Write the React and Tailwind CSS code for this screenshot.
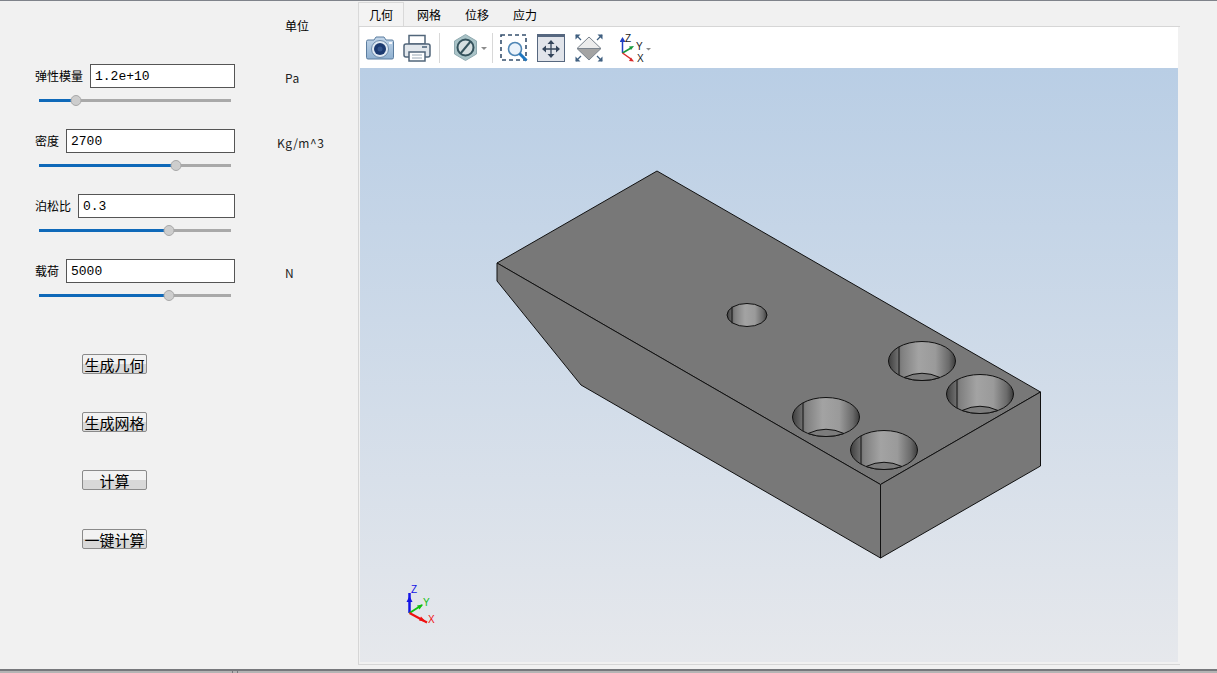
import React from 'react';

const fields = [
  { label: '弹性模量', value: '1.2e+10', thumb: 37, unit: 'Pa', unitClass: 'pl-[50px]' },
  { label: '密度', value: '2700', thumb: 137, unit: 'Kg/m^3', unitClass: 'pl-[42px]' },
  { label: '泊松比', value: '0.3', thumb: 130, unit: '', unitClass: '' },
  { label: '载荷', value: '5000', thumb: 130, unit: 'N', unitClass: 'pl-[50px]' },
];

const actions = ['生成几何', '生成网格', '计算', '一键计算'];
const tabs = ['几何', '网格', '位移', '应力'];

const holes = [
  { cx: 922, cy: 361 },
  { cx: 980, cy: 394 },
  { cx: 826, cy: 417 },
  { cx: 884, cy: 450 },
];

function Slider({ thumb }) {
  return (
    <div className="relative h-[3px] w-[192px] bg-[#a9a9a9]">
      <div className="h-full bg-[#0f69b9]" style={{ width: thumb }} />
      <div className="absolute top-[-4px] h-[11px] w-[11px] -translate-x-1/2 rounded-full border border-[#a8a8a8] bg-[#cdcdcd]" style={{ left: thumb }} />
    </div>
  );
}

function Field({ label, value, thumb, unit, unitClass }) {
  return (
    <div className="flex h-[65px]">
      <div className="w-[200px]">
        <div className="flex items-center gap-[7px]">
          <span className="text-xs leading-none whitespace-nowrap text-black">{label}</span>
          <input
            readOnly
            value={value}
            className="h-[24px] min-w-0 flex-1 border border-[#555] bg-white px-[4px] text-[13px] text-black outline-none [font-family:'Liberation_Mono',monospace]"
          />
        </div>
        <div className="mt-[11px] pl-[4px]">
          <Slider thumb={thumb} />
        </div>
      </div>
      <div className={`pt-[6px] text-xs leading-4 tracking-[0.5px] text-[#222] ${unitClass}`}>{unit}</div>
    </div>
  );
}

function Camera() {
  return (
    <svg width="28" height="24" viewBox="0 0 28 24">
      <defs>
        <linearGradient id="camBody" x1="0" y1="0" x2="0" y2="1">
          <stop offset="0" stopColor="#c3d6e9" />
          <stop offset="1" stopColor="#8fb0d0" />
        </linearGradient>
      </defs>
      <path d="M2 4h6l2-3h8l2 3h6a1.500 1.500 0 0 1 1.500 1.500v16a1.500 1.500 0 0 1-1.500 1.500H2a1.500 1.500 0 0 1-1.500-1.500v-16A1.500 1.500 0 0 1 2 4z" fill="url(#camBody)" stroke="#5b7d9f" />
      <rect x="23" y="6" width="3" height="2" fill="#f4f7fb" />
      <circle cx="14" cy="13" r="8.500" fill="#dfe9f3" stroke="#6f8cab" />
      <circle cx="14" cy="13" r="6" fill="#1c3a70" />
      <circle cx="14" cy="13" r="2.500" fill="#34558c" />
    </svg>
  );
}

function Printer() {
  return (
    <svg width="28" height="28" viewBox="0 0 28 28">
      <path d="M6 10V1.500h16V10z" fill="#fff" stroke="#51667a" strokeWidth="1.500" />
      <path d="M3 10h22a2 2 0 0 1 2 2v9a2 2 0 0 1-2 2H3a2 2 0 0 1-2-2v-9a2 2 0 0 1 2-2z" fill="#e2e7ec" stroke="#51667a" strokeWidth="1.500" />
      <rect x="19" y="12" width="5" height="2" fill="#6f8294" />
      <rect x="6" y="18" width="16" height="9" fill="#fff" stroke="#51667a" strokeWidth="1.500" />
      <path d="M9 21h10M9 24h10" stroke="#9aa8b5" />
    </svg>
  );
}

function HexIcon() {
  return (
    <svg width="33" height="27" viewBox="0 0 33 27">
      <path d="M11.500 0.500l11 6.500v13l-11 6.500-11-6.500V7z" fill="#a9c3c7" stroke="#90aab0" />
      <circle cx="11.500" cy="13.500" r="8" fill="#d6dfe1" stroke="#35535d" strokeWidth="2" />
      <path d="M6.500 19.500l10-12" stroke="#35535d" strokeWidth="2" />
      <path d="M27 13h6l-3 3z" fill="#8c8c8c" />
    </svg>
  );
}

function ZoomBox() {
  return (
    <svg width="28" height="28" viewBox="0 0 28 28">
      <rect x="1" y="1" width="25" height="25" fill="none" stroke="#36506e" strokeWidth="1.600" strokeDasharray="4 3" />
      <circle cx="15" cy="15" r="6.500" fill="#eaf2fa" stroke="#4f86b5" strokeWidth="1.600" />
      <path d="M19.500 19.500l7 7" stroke="#1f77c0" strokeWidth="3" />
    </svg>
  );
}

function FitAll() {
  return (
    <svg width="28" height="28" viewBox="0 0 28 28">
      <rect x="0.500" y="0.500" width="27" height="27" fill="#e1e4ea" stroke="#56677f" />
      <rect x="0" y="0" width="28" height="3" fill="#56677f" />
      <path d="M14 9v12M8 15h12" stroke="#33445a" strokeWidth="1.300" />
      <path d="M14 6l3.500 4h-7zM14 24l3.500-4h-7zM5 15l4-3.500v7zM23 15l-4-3.500v7z" fill="#33445a" />
    </svg>
  );
}

function Diamond() {
  return (
    <svg width="28" height="28" viewBox="0 0 28 28">
      <path d="M14 3l12 11.500H2z" fill="#ececec" stroke="#7b848e" />
      <path d="M2 14.500h24L14 26z" fill="#a3a3a3" stroke="#7b848e" />
      <path d="M1 1l5 5M27 1l-5 5M1 27l5-5M27 27l-5-5" stroke="#3f5f80" strokeWidth="1.300" />
      <path d="M0.500 0.500h5l-5 5zM27.500 0.500h-5l5 5zM0.500 27.500h5l-5-5zM27.500 27.500h-5l5-5z" fill="#3f5f80" />
    </svg>
  );
}

function AxesIcon() {
  return (
    <svg width="32" height="32" viewBox="0 0 32 32">
      <path d="M2.500 21V9" stroke="#1f3fc4" strokeWidth="1.500" />
      <path d="M2.500 5l3 5h-6z" fill="#1f3fc4" />
      <path d="M2.500 21L11 16" stroke="#179a3c" strokeWidth="1.500" />
      <path d="M14 14l-5 .500 2 3.500z" fill="#179a3c" />
      <path d="M2.500 21L11 27" stroke="#d92a2a" strokeWidth="1.500" />
      <path d="M14 29.500l-5-.500 2-3.500z" fill="#d92a2a" />
      <text x="5" y="10" fontSize="10" fill="#222" fontFamily="Liberation Sans, sans-serif">Z</text>
      <text x="16" y="18" fontSize="10" fill="#222" fontFamily="Liberation Sans, sans-serif">Y</text>
      <text x="17" y="30" fontSize="10" fill="#222" fontFamily="Liberation Sans, sans-serif">X</text>
      <path d="M26 16h5l-2.500 2.500z" fill="#8c8c8c" />
    </svg>
  );
}

function Hole({ cx, cy, rx, ry, lineOffset, floor }) {
  return (
    <g stroke="#111">
      <ellipse cx={cx} cy={cy} rx={rx} ry={ry} fill="url(#bore)" />
      {floor && (
        <path
          d={`M${cx - 18} ${cy + 16.500}Q${cx} ${cy + 8} ${cx + 18} ${cy + 16.500}A${rx} ${ry} 0 0 1 ${cx - 18} ${cy + 16.500}z`}
          fill="#7c7c7c"
        />
      )}
      <path d={`M${cx - lineOffset} ${cy - ry * 0.72}V${cy + ry * 0.72}`} fill="none" />
    </g>
  );
}

function Model() {
  return (
    <svg viewBox="360 68 818 594" className="h-full w-full">
      <defs>
        <linearGradient id="bore" x1="0" y1="0" x2="1" y2="0">
          <stop offset="0" stopColor="#3f3f3f" />
          <stop offset="0.2" stopColor="#808080" />
          <stop offset="0.45" stopColor="#a3a3a3" />
          <stop offset="0.7" stopColor="#9a9a9a" />
          <stop offset="0.9" stopColor="#6a6a6a" />
          <stop offset="1" stopColor="#3c3c3c" />
        </linearGradient>
      </defs>
      <g stroke="#111" strokeWidth="1" strokeLinejoin="round">
        <path d="M657 171L497 263L880.500 484.500L1040.500 392z" fill="#787878" />
        <path d="M497 263V281L581 385L880.500 558V484.500z" fill="#787878" />
        <path d="M880.500 484.500L1040.500 392V466L880.500 558z" fill="#787878" />
      </g>
      <Hole cx={747} cy={315} rx={20} ry={11.500} lineOffset={15} />
      {holes.map(h => (
        <Hole key={h.cx} cx={h.cx} cy={h.cy} rx={33.500} ry={19.500} lineOffset={23} floor />
      ))}
      <g fontFamily="Liberation Sans, sans-serif" fontSize="10">
        <path d="M409.500 613V593" stroke="#1414e6" strokeWidth="2.500" />
        <path d="M409.500 596l3 6h-6z" fill="#1414e6" />
        <path d="M409.500 613L422 605" stroke="#10c010" strokeWidth="2" />
        <path d="M423 604.500l-6 1 2.500 4z" fill="#10c010" />
        <path d="M409.500 613L427 622.500" stroke="#f01010" strokeWidth="2" />
        <path d="M426 622l-7-1.500 2-4z" fill="#f01010" />
        <text x="411" y="593" fill="#1414e6">Z</text>
        <text x="423" y="606" fill="#10c010">Y</text>
        <text x="428" y="623" fill="#f01010">X</text>
      </g>
    </svg>
  );
}

export default function App() {
  return (
    <div className="flex h-[673px] w-[1217px] flex-col overflow-hidden bg-[#f1f1f1] [font-family:'Noto_Sans_CJK_SC',sans-serif]">
      <div className="h-px shrink-0 bg-[#7f838b]" />
      <div className="flex min-h-0 flex-1">
        <aside className="w-[358px] shrink-0 pl-[35px]">
          <div className="flex h-[63px] pl-[250px] pt-[17px]">
            <span className="text-xs leading-4 text-black">单位</span>
          </div>
          {fields.map(f => (
            <Field key={f.label} {...f} />
          ))}
          <div className="mt-[30px] flex flex-col gap-[38px] pl-[47px]">
            {actions.map((a, i) => (
              <button
                key={a}
                className={`h-[20px] w-[65px] rounded-[2px] border border-[#8a8a8a] bg-linear-to-b from-[#f2f2f2] from-50% to-[#d8d8d8] to-50% text-[15px] leading-none whitespace-nowrap text-black ${i === 3 ? 'mt-px' : ''}`}
              >
                {a}
              </button>
            ))}
          </div>
        </aside>

        <main className="flex h-[664px] w-[822px] shrink-0 flex-col pt-px">
          <div className="flex h-[24px] shrink-0 text-xs text-black">
            {tabs.map((t, i) => (
              <div
                key={t}
                className={i === 0
                  ? 'flex h-full w-[46px] items-center justify-center border-x border-t border-[#d9d9d9] bg-[#f3f3f3] pt-px'
                  : 'flex h-full w-[48px] items-center justify-center pt-px pl-[2px]'}
              >
                {t}
              </div>
            ))}
          </div>
          <div className="flex min-h-0 flex-1 flex-col border-t border-b border-l border-[#d6d6d6] pr-[2px] pb-[2px] pl-px">
            <div className="flex h-[41px] shrink-0 items-center bg-white pl-[6px]">
              <Camera />
              <div className="ml-[9px]"><Printer /></div>
              <div className="ml-[8px] h-[30px] w-px bg-[#d8d8d8]" />
              <div className="ml-[14px]"><HexIcon /></div>
              <div className="ml-[5px] h-[30px] w-px bg-[#d8d8d8]" />
              <div className="ml-[7px]"><ZoomBox /></div>
              <div className="ml-[9px]"><FitAll /></div>
              <div className="ml-[10px]"><Diamond /></div>
              <div className="ml-[17px]"><AxesIcon /></div>
            </div>
            <div className="min-h-0 flex-1 bg-linear-to-b from-[#b9cee5] to-[#e6e8ec]">
              <Model />
            </div>
          </div>
        </main>
      </div>
      <div className="mt-[4px] h-[2px] shrink-0 bg-[#77787c]" />
      <div className="flex h-[2px] shrink-0 bg-[#b4b4b4]">
        <div className="ml-[232px] w-px bg-[#77787c]" />
        <div className="ml-[4px] w-px bg-[#77787c]" />
      </div>
    </div>
  );
}
